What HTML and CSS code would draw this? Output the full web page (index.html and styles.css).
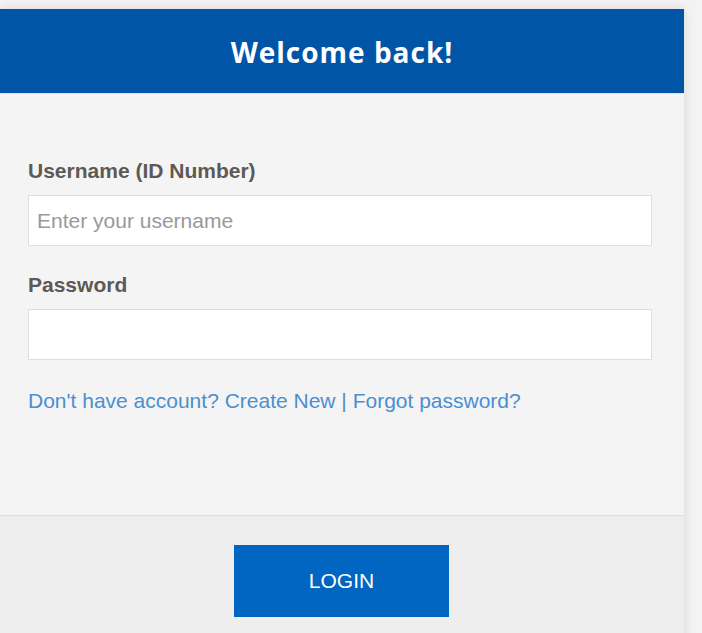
FILE: index.html
```html
<!DOCTYPE html>
<html lang="en">
<head>
<meta charset="utf-8">
<title>Welcome back!</title>
<link rel="stylesheet" href="styles.css">
</head>
<body>
<div class="card">
  <div class="card-header">
    <h1 class="title">Welcome back!</h1>
  </div>
  <div class="card-body">
    <div class="field">
      <label class="label" for="username">Username (ID Number)</label>
      <input class="input" id="username" type="text" placeholder="Enter your username">
    </div>
    <div class="field">
      <label class="label" for="password">Password</label>
      <input class="input" id="password" type="password">
    </div>
    <p class="links"><a class="link" href="#">Don't have account? Create New</a> | <a class="link" href="#">Forgot password?</a></p>
  </div>
  <div class="card-footer">
    <button class="btn" type="button">LOGIN</button>
  </div>
</div>
</body>
</html>
```
FILE: styles.css
```css
html, body {
  margin: 0;
  padding: 0;
}
body {
  background: #f3f3f3;
  font-family: "Liberation Sans", Arial, sans-serif;
  padding-top: 9px;
}
.card {
  width: 684px;
  background: #f4f4f4;
  box-shadow: 0 0 10px rgba(0, 0, 0, 0.12);
}
.card-header {
  background: #0055a6;
  height: 84px;
  display: flex;
  align-items: center;
  justify-content: center;
  border-bottom: 1px solid #e2e2e2;
}
.title {
  margin: 0;
  color: #ffffff;
  font-family: "Open Sans", sans-serif;
  font-weight: 700;
  font-size: 28px;
  letter-spacing: 1px;
  line-height: 1;
  padding-top: 2px;
}
.card-body {
  padding: 65px 32px 102px 28px;
}
.field {
  display: flex;
  flex-direction: column;
  margin-bottom: 27px;
}
.label {
  color: #5e5955;
  font-size: 21px;
  font-weight: 700;
  line-height: 24px;
  margin-bottom: 12px;
}
.input {
  box-sizing: border-box;
  height: 51px;
  width: 100%;
  border: 1px solid #dedede;
  background: #ffffff;
  padding: 0 8px;
  font-family: "Liberation Sans", Arial, sans-serif;
  font-size: 21px;
  color: #333;
  outline: none;
}
.input::placeholder {
  color: #999999;
}
.links {
  margin: 0;
  padding-top: 2px;
  font-size: 21px;
  line-height: 24px;
  color: #4a8fd0;
}
.link {
  color: #4a8fd0;
  text-decoration: none;
}
.card-footer {
  background: #eeeeee;
  border-top: 1px solid #dddddd;
  padding: 29px 1px 30px 0;
  display: flex;
  justify-content: center;
}
.btn {
  width: 215px;
  height: 72px;
  border: none;
  background: #0066c2;
  color: #ffffff;
  font-family: "Liberation Sans", Arial, sans-serif;
  font-size: 21px;
  cursor: pointer;
}
```
